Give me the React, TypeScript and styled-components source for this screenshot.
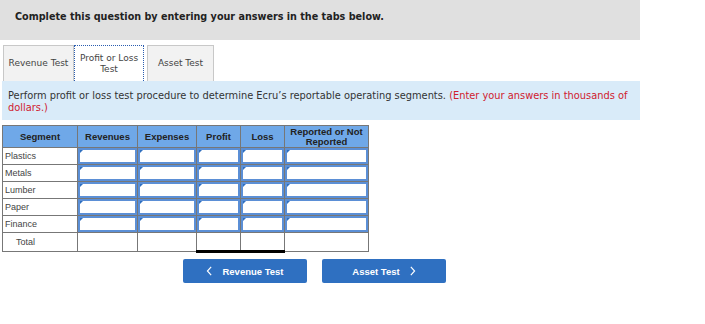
import styled, { createGlobalStyle } from "styled-components";

const GlobalStyle = createGlobalStyle`
  body {
    margin: 0;
    background: #fff;
    font-family: "DejaVu Sans", Verdana, sans-serif;
  }
`;

const segments = ["Plastics", "Metals", "Lumber", "Paper", "Finance"];
const columns = [
  { label: "Revenues", width: 60 },
  { label: "Expenses", width: 59 },
  { label: "Profit", width: 44 },
  { label: "Loss", width: 44 },
  { label: "Reported or Not Reported", width: 84 },
];

export default function App() {
  return (
    <>
      <GlobalStyle />
      <Page>
        <Instructions>
          Complete this question by entering your answers in the tabs below.
        </Instructions>
        <Tabs>
          <Tab $width={71}>Revenue Test</Tab>
          <Tab $width={70} $active>
            Profit or Loss Test
          </Tab>
          <Tab $width={67}>Asset Test</Tab>
        </Tabs>
        <Prompt>
          Perform profit or loss test procedure to determine Ecru’s reportable
          operating segments.{" "}
          <Hint>(Enter your answers in thousands of dollars.)</Hint>
        </Prompt>
        <Table>
          <colgroup>
            <col style={{ width: 75 }} />
            {columns.map((c) => (
              <col key={c.label} style={{ width: c.width }} />
            ))}
          </colgroup>
          <thead>
            <tr>
              <Head>Segment</Head>
              {columns.map((c) => (
                <Head key={c.label}>{c.label}</Head>
              ))}
            </tr>
          </thead>
          <tbody>
            {segments.map((s) => (
              <tr key={s}>
                <Label>{s}</Label>
                {columns.map((c) => (
                  <InputCell key={c.label}>
                    <Field />
                  </InputCell>
                ))}
              </tr>
            ))}
            <tr>
              <Label $total>Total</Label>
              <TotalCell />
              <TotalCell />
              <TotalCell $sum />
              <TotalCell $sum />
              <TotalCell />
            </tr>
          </tbody>
        </Table>
        <Nav>
          <NavButton>
            <Chevron viewBox="0 0 8 12">
              <path d="M6 1 L1.5 6 L6 11" />
            </Chevron>
            Revenue Test
          </NavButton>
          <NavButton>
            Asset Test
            <Chevron viewBox="0 0 8 12">
              <path d="M2 1 L6.5 6 L2 11" />
            </Chevron>
          </NavButton>
        </Nav>
      </Page>
    </>
  );
}

const Page = styled.div`
  width: 640px;
  display: flex;
  flex-direction: column;
`;

const Instructions = styled.div`
  background: #e0e0e0;
  height: 40px;
  box-sizing: border-box;
  padding: 11px 15px;
  font-size: 9.65px;
  font-weight: bold;
  color: #222;
`;

const Tabs = styled.div`
  display: flex;
  align-items: stretch;
  margin: 5px 0 0 3px;
  height: 36px;
`;

const Tab = styled.div<{ $active?: boolean; $width: number }>`
  box-sizing: border-box;
  width: ${({ $width }) => $width}px;
  margin-right: ${({ $active }) => ($active ? "3px" : "0")};
  display: flex;
  align-items: center;
  justify-content: center;
  text-align: center;
  padding: 0 3px;
  font-size: 9px;
  line-height: 11px;
  color: #444;
  background: ${({ $active }) => ($active ? "#fff" : "#f2f2f2")};
  border: ${({ $active }) =>
    $active ? "1px dotted #2a5db0" : "1px solid #c8c8c8"};
  border-bottom: none;
`;

const Prompt = styled.div`
  margin-left: 2px;
  background: #d9ebf9;
  height: 39px;
  box-sizing: border-box;
  padding: 9px 6px 0;
  font-size: 9.85px;
  line-height: 12px;
  color: #333;
`;

const Hint = styled.span`
  color: #d0202e;
`;

const Table = styled.table`
  margin: 5px 0 0 2px;
  border-collapse: collapse;
  table-layout: fixed;
  width: 366px;
  font-family: "Liberation Sans", Arial, sans-serif;
  font-size: 9px;
  color: #333;
`;

const Head = styled.th`
  background: #6fa8e8;
  border: 1px solid #777;
  height: 21px;
  padding: 0 2px;
  font-size: 9.5px;
  font-weight: bold;
  line-height: 10px;
  color: #222;
`;

const Label = styled.td<{ $total?: boolean }>`
  border: 1px solid #777;
  height: 15px;
  padding: 0 0 0 ${({ $total }) => ($total ? "13px" : "2px")};
  color: #444;
`;

const InputCell = styled.td`
  border: 1px solid #777;
  padding: 0;
  height: 16px;
`;

const Field = styled.div`
  position: relative;
  box-sizing: border-box;
  height: 16px;
  border: 2px solid #5b8fd6;
  background: #fff;
  &::before {
    content: "";
    position: absolute;
    left: 0;
    top: 0;
    border-top: 3px solid #2f6fbf;
    border-right: 3px solid transparent;
  }
`;

const TotalCell = styled.td<{ $sum?: boolean }>`
  border: 1px solid #777;
  border-top: ${({ $sum }) => ($sum ? "1px solid #000" : "1px solid #777")};
  border-bottom: ${({ $sum }) => ($sum ? "3px solid #000" : "1px solid #777")};
  height: 17px;
  padding: 0;
`;

const Nav = styled.div`
  display: flex;
  gap: 15px;
  margin: 6px 0 0 183px;
`;

const NavButton = styled.button`
  width: 124px;
  height: 24px;
  display: flex;
  align-items: center;
  justify-content: center;
  gap: 9px;
  background: #2f70c1;
  color: #fff;
  border: none;
  border-radius: 2px;
  font-family: "Liberation Sans", Arial, sans-serif;
  font-size: 9.5px;
  font-weight: bold;
  padding: 0;
`;

const Chevron = styled.svg`
  width: 7px;
  height: 10px;
  fill: none;
  stroke: #fff;
  stroke-width: 1.4;
`;
